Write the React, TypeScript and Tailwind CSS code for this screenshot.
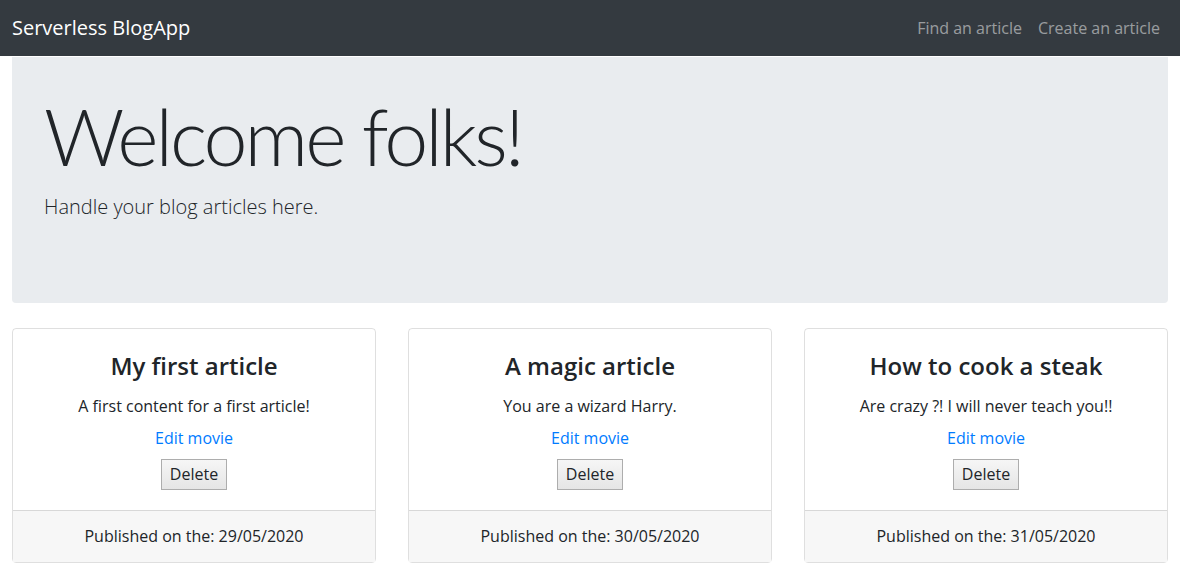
const articles = [
  { id: 1, title: 'My first article', content: 'A first content for a first article!', date: '29/05/2020' },
  { id: 2, title: 'A magic article', content: 'You are a wizard Harry.', date: '30/05/2020' },
  { id: 3, title: 'How to cook a steak', content: 'Are crazy ?! I will never teach you!!', date: '31/05/2020' }
];

export default function App() {
  return (
    <div className="min-h-screen bg-white text-[#212529] font-['Open_Sans',sans-serif]">
      {/* Navbar */}
      <nav className="h-14 bg-[#343a40] px-3 flex items-center justify-between">
        <a href="#" className="text-white text-xl">Serverless BlogApp</a>
        <div className="flex">
          <a href="#" className="px-2 text-base text-white/50">Find an article</a>
          <a href="#" className="px-2 text-base text-white/50">Create an article</a>
        </div>
      </nav>

      <div className="px-3">
        {/* Jumbotron */}
        <div className="mt-px bg-[#e9ecef] rounded-b pt-8 pb-[81px] px-8">
          <h1 className="text-[79px] leading-[1.2] font-light mb-2 font-['Lato',sans-serif] tracking-[-3px]">Welcome folks!</h1>
          <p className="text-xl font-light leading-normal">Handle your blog articles here.</p>
        </div>

        {/* Articles */}
        <div className="mt-[25px] grid grid-cols-3 gap-8">
          {articles.map(article => (
            <div key={article.id} className="border border-black/[.125] rounded flex flex-col text-center">
              <div className="p-5 flex flex-col items-center">
                <h4 className="text-2xl font-semibold leading-[1.2] mt-[3px]">{article.title}</h4>
                <p className="mt-[13px] leading-6">{article.content}</p>
                <a href="#" className="mt-[8px] text-[#007bff] leading-6">Edit movie</a>
                <button className="mt-[9px] px-[8px] h-[31px] border border-[#adadad] bg-gradient-to-b from-[#f6f6f6] to-[#e5e5e5] text-base leading-none">
                  Delete
                </button>
              </div>
              <div className="border-t border-black/[.125] bg-[#f7f7f7] h-[52px] flex items-center justify-center">
                Published on the: {article.date}
              </div>
            </div>
          ))}
        </div>
      </div>
    </div>
  );
}
